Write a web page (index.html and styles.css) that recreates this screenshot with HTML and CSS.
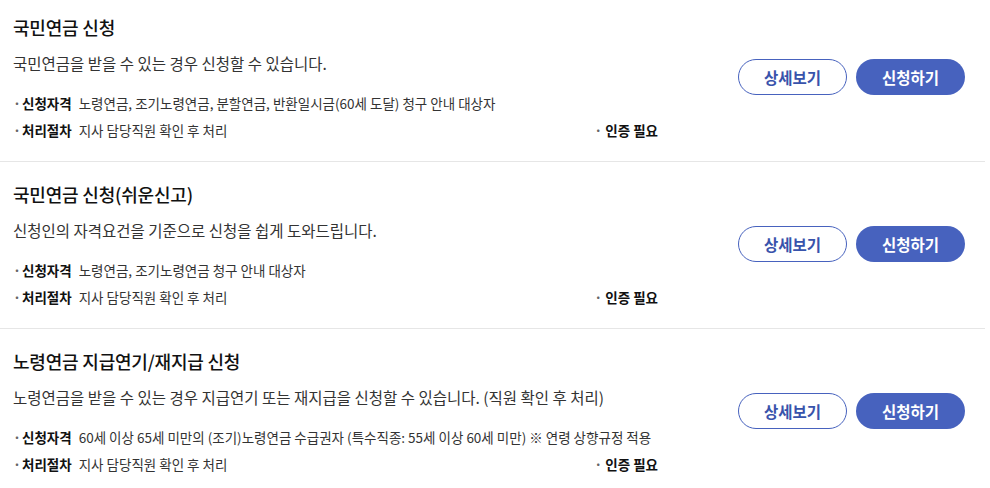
FILE: index.html
```html
<!doctype html>
<html>
<head>
<meta charset="utf-8">
<title>연금 신청</title>
<link rel="stylesheet" href="styles.css">
</head>
<body>
<div class="list">
	<div class="item">
		<div class="info">
			<div class="tit">국민연금 신청</div>
			<p class="desc">국민연금을 받을 수 있는 경우 신청할 수 있습니다.</p>
			<ul class="detail">
				<li><span class="dot">·</span><b>신청자격</b>노령연금, 조기노령연금, 분할연금, 반환일시금(60세 도달) 청구 안내 대상자</li>
				<li class="row"><span><span class="dot">·</span><b>처리절차</b>지사 담당직원 확인 후 처리</span><span class="cert"><span class="dot">·</span>인증 필요</span></li>
			</ul>
		</div>
		<div class="btns">
			<a class="btn line" href="#">상세보기</a>
			<a class="btn fill" href="#">신청하기</a>
		</div>
	</div>
	<div class="item">
		<div class="info">
			<div class="tit">국민연금 신청(쉬운신고)</div>
			<p class="desc">신청인의 자격요건을 기준으로 신청을 쉽게 도와드립니다.</p>
			<ul class="detail">
				<li><span class="dot">·</span><b>신청자격</b>노령연금, 조기노령연금 청구 안내 대상자</li>
				<li class="row"><span><span class="dot">·</span><b>처리절차</b>지사 담당직원 확인 후 처리</span><span class="cert"><span class="dot">·</span>인증 필요</span></li>
			</ul>
		</div>
		<div class="btns">
			<a class="btn line" href="#">상세보기</a>
			<a class="btn fill" href="#">신청하기</a>
		</div>
	</div>
	<div class="item">
		<div class="info">
			<div class="tit">노령연금 지급연기/재지급 신청</div>
			<p class="desc">노령연금을 받을 수 있는 경우 지급연기 또는 재지급을 신청할 수 있습니다. (직원 확인 후 처리)</p>
			<ul class="detail">
				<li><span class="dot">·</span><b>신청자격</b>60세 이상 65세 미만의 (조기)노령연금 수급권자 (특수직종: 55세 이상 60세 미만) ※ 연령 상향규정 적용</li>
				<li class="row"><span><span class="dot">·</span><b>처리절차</b>지사 담당직원 확인 후 처리</span><span class="cert"><span class="dot">·</span>인증 필요</span></li>
			</ul>
		</div>
		<div class="btns">
			<a class="btn line" href="#">상세보기</a>
			<a class="btn fill" href="#">신청하기</a>
		</div>
	</div>
</div>
</body>
</html>
```
FILE: styles.css
```css
body{
	margin:0;
	background:#fff;
	font-family:"Noto Sans CJK KR","Noto Sans",sans-serif;
	color:#222;
}
.list{
	width:985px;
	margin-top:-5px;
}
.item{
	display:flex;
	align-items:center;
	justify-content:space-between;
	padding:20px 20px 17px 13px;
	border-bottom:1px solid #e6e6e6;
}
.info{
	width:645px;
}
.tit{
	font-size:18px;
	line-height:24px;
	font-weight:500;
	color:#111;
	letter-spacing:-0.2px;
	margin-bottom:13px;
}
.desc{
	margin:0 0 16px;
	font-size:15.5px;
	line-height:22px;
	color:#333;
}
.detail{
	list-style:none;
	margin:0;
	padding:0;
	font-size:13.5px;
	line-height:27px;
	color:#333;
	white-space:nowrap;
}
.detail b{
	color:#111;
	margin-right:7px;
}
.dot{
	display:inline-block;
	width:9px;
	color:#666;
	font-weight:bold;
}
.row{
	display:flex;
	justify-content:space-between;
}
.cert{
	font-weight:bold;
	color:#111;
}
.cert .dot{
	width:11px;
}
.btns{
	display:flex;
	gap:9px;
	padding-bottom:6px;
}
.btn{
	display:flex;
	align-items:center;
	justify-content:center;
	box-sizing:border-box;
	width:109px;
	height:36px;
	border-radius:18px;
	font-size:15.5px;
	font-weight:bold;
	text-decoration:none;
}
.line{
	border:1px solid #4762be;
	color:#3853ab;
	background:#fff;
}
.fill{
	background:#4762be;
	color:#fff;
}
```
